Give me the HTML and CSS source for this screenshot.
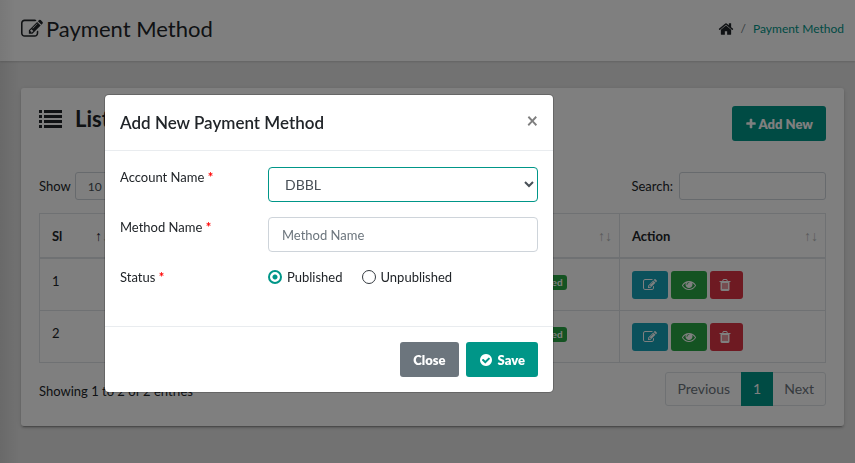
FILE: index.html
```html
<!DOCTYPE html>
<html lang="en">
<head>
<meta charset="utf-8">
<title>Payment Method</title>
<link rel="stylesheet" href="styles.css">
</head>
<body>
<svg class="sprite" aria-hidden="true">
  <symbol id="i-edit" viewBox="0 0 1792 1792"><path d="M888 1184l116-116-152-152-116 116v56h96v96h56zm440-720q-16-16-33 1l-350 350q-17 17-1 33t33-1l350-350q17-17 1-33zm80 594v190q0 119-84.500 203.500t-203.500 84.500h-832q-119 0-203.500-84.500t-84.500-203.500v-832q0-119 84.500-203.500t203.500-84.500h832q63 0 117 25 15 7 18 23 3 17-9 29l-49 49q-14 14-32 8-23-6-45-6h-832q-66 0-113 47t-47 113v832q0 66 47 113t113 47h832q66 0 113-47t47-113v-126q0-13 9-22l64-64q15-15 35-7t20 29zm-96-738l288 288-672 672h-288v-288zm444 132l-92 92-288-288 92-92q28-28 68-28t68 28l152 152q28 28 28 68t-28 68z"/></symbol>
  <symbol id="i-eye" viewBox="0 0 1792 1792"><path d="M1664 960q-152-236-381-353 61 104 61 225 0 185-131.500 316.500t-316.500 131.500-316.500-131.500-131.500-316.500q0-121 61-225-229 117-381 353 133 205 333.500 326.500t434.500 121.500 434.500-121.500 333.500-326.500zm-720-384q0-20-14-34t-34-14q-125 0-214.500 89.500t-89.500 214.500q0 20 14 34t34 14 34-14 14-34q0-86 61-147t147-61q20 0 34-14t14-34zm848 384q0 34-20 69-140 230-376.500 368.500t-499.500 138.500-499.500-139-376.500-368q-20-35-20-69t20-69q140-229 376.500-368t499.500-139 499.500 139 376.500 368q20 35 20 69z"/></symbol>
  <symbol id="i-trash" viewBox="0 0 1792 1792"><path d="M704 1376v-704q0-14-9-23t-23-9h-64q-14 0-23 9t-9 23v704q0 14 9 23t23 9h64q14 0 23-9t9-23zm256 0v-704q0-14-9-23t-23-9h-64q-14 0-23 9t-9 23v704q0 14 9 23t23 9h64q14 0 23-9t9-23zm256 0v-704q0-14-9-23t-23-9h-64q-14 0-23 9t-9 23v704q0 14 9 23t23 9h64q14 0 23-9t9-23zm-544-992h448l-48-117q-7-9-17-11h-317q-10 2-17 11zm928 32v64q0 14-9 23t-23 9h-96v948q0 83-47 143.500t-113 60.500h-832q-66 0-113-58.500t-47-141.500v-952h-96q-14 0-23-9t-9-23v-64q0-14 9-23t23-9h309l70-167q15-37 54-63t79-26h320q40 0 79 26t54 63l70 167h309q14 0 23 9t9 23z"/></symbol>
  <symbol id="i-home" viewBox="0 0 1792 1792"><path d="M1472 992v480q0 26-19 45t-45 19h-384v-384h-256v384h-384q-26 0-45-19t-19-45v-480q0-1 .5-3t.5-3l575-474 575 474q1 2 1 6zm223-69l-62 74q-8 9-21 11h-3q-13 0-21-7l-692-577-692 577q-12 8-24 7-13-2-21-11l-62-74q-8-10-7-23.500t11-21.500l719-599q32-26 76-26t76 26l244 204v-195q0-14 9-23t23-9h192q14 0 23 9t9 23v408l219 182q10 8 11 21.500t-7 23.500z"/></symbol>
  <symbol id="i-plus" viewBox="0 0 1792 1792"><path d="M1600 736v192q0 40-28 68t-68 28h-416v416q0 40-28 68t-68 28h-192q-40 0-68-28t-28-68v-416h-416q-40 0-68-28t-28-68v-192q0-40 28-68t68-28h416v-416q0-40 28-68t68-28h192q40 0 68 28t28 68v416h416q40 0 68 28t28 68z"/></symbol>
  <symbol id="i-check" viewBox="0 0 1792 1792"><path d="M1412 734q0-28-18-46l-91-90q-19-19-45-19t-45 19l-408 407-226-226q-19-19-45-19t-45 19l-91 90q-18 18-18 46 0 27 18 45l362 362q19 19 45 19 27 0 46-19l543-543q18-18 18-45zm252 162q0 209-103 385.500t-279.500 279.500-385.500 103-385.500-103-279.500-279.500-103-385.500 103-385.500 279.500-279.500 385.500-103 385.500 103 279.500 279.500 103 385.500z"/></symbol>
  <symbol id="i-list" viewBox="0 0 23 18"><path d="M0 0h3v3H0zM5 0h18v3H5zM0 5h3v3H0zM5 5h18v3H5zM0 10h3v3H0zM5 10h18v3H5zM0 15h3v3H0zM5 15h18v3H5z"/></symbol>
</svg>

<header class="page-head">
  <h1><svg class="icon icon-lg"><use href="#i-edit"/></svg>Payment Method</h1>
  <nav class="crumbs" aria-label="Breadcrumb">
    <svg class="icon icon-home"><use href="#i-home"/></svg>
    <span class="slash">/</span>
    <a href="#">Payment Method</a>
  </nav>
</header>

<main class="content">
  <section class="tile">
    <div class="tile-head">
      <h2><svg class="icon-list"><use href="#i-list"/></svg>List</h2>
      <button class="btn btn-primary" type="button"><svg class="icon icon-sm"><use href="#i-plus"/></svg>Add New</button>
    </div>

    <div class="table-tools">
      <label>Show <select class="mini length"><option>10</option></select></label>
      <label>Search: <input class="mini search" type="search"></label>
    </div>

    <table>
      <colgroup><col class="c-no"><col><col class="c-status"><col class="c-action"></colgroup>
      <thead>
        <tr>
          <th><div class="th">Sl<span class="sort"><b>↑</b>↓</span></div></th>
          <th></th>
          <th><div class="th th-end"><span class="sort">↑↓</span></div></th>
          <th><div class="th">Action<span class="sort">↑↓</span></div></th>
        </tr>
      </thead>
      <tbody>
        <tr>
          <td>1</td><td></td><td><span class="badge">Published</span></td>
          <td><div class="actions">
            <button class="act info" type="button" aria-label="Edit"><svg class="icon"><use href="#i-edit"/></svg></button>
            <button class="act ok" type="button" aria-label="View"><svg class="icon"><use href="#i-eye"/></svg></button>
            <button class="act danger" type="button" aria-label="Delete"><svg class="icon"><use href="#i-trash"/></svg></button>
          </div></td>
        </tr>
        <tr>
          <td>2</td><td></td><td><span class="badge">Published</span></td>
          <td><div class="actions">
            <button class="act info" type="button" aria-label="Edit"><svg class="icon"><use href="#i-edit"/></svg></button>
            <button class="act ok" type="button" aria-label="View"><svg class="icon"><use href="#i-eye"/></svg></button>
            <button class="act danger" type="button" aria-label="Delete"><svg class="icon"><use href="#i-trash"/></svg></button>
          </div></td>
        </tr>
      </tbody>
    </table>

    <div class="table-foot">
      <p>Showing 1 to 2 of 2 entries</p>
      <nav class="pager" aria-label="Pages">
        <a href="#">Previous</a><a href="#" class="current">1</a><a href="#">Next</a>
      </nav>
    </div>
  </section>
</main>

<div class="backdrop">
  <form class="modal" role="dialog" aria-labelledby="modal-title">
    <div class="modal-head">
      <h3 id="modal-title">Add New Payment Method</h3>
      <button class="close" type="button" aria-label="Dismiss">×</button>
    </div>
    <div class="modal-body">
      <div class="row">
        <label for="account">Account Name <i>*</i></label>
        <select id="account" class="control active"><option>DBBL</option></select>
      </div>
      <div class="row">
        <label for="method">Method Name <i>*</i></label>
        <input id="method" class="control" type="text" placeholder="Method Name">
      </div>
      <div class="row">
        <span>Status <i>*</i></span>
        <div class="radios">
          <label><input type="radio" name="status" checked>Published</label>
          <label><input type="radio" name="status">Unpublished</label>
        </div>
      </div>
    </div>
    <div class="modal-foot">
      <button class="btn btn-secondary" type="button">Close</button>
      <button class="btn btn-primary" type="button"><svg class="icon icon-gap"><use href="#i-check"/></svg>Save</button>
    </div>
  </form>
</div>
</body>
</html>
```
FILE: styles.css
```css
* { box-sizing: border-box; }

body {
  margin: 0;
  min-height: 100vh;
  background: linear-gradient(to right, rgba(0, 0, 0, .08), transparent 20px) #e5e5e5;
  color: #212529;
  font: 13px/20px Lato, "Liberation Sans", sans-serif;
  overflow: hidden;
}

h1, h2, h3, p { margin: 0; }
button, input, select { font: inherit; color: inherit; }
a { text-decoration: none; }

.sprite { position: absolute; width: 0; height: 0; }
.icon { width: 14px; height: 14px; fill: currentColor; flex: none; }
.icon-sm { width: 12px; height: 12px; }
.icon-lg { width: 22px; height: 22px; }
.icon-home { width: 16px; height: 16px; }

.page-head {
  display: flex;
  align-items: center;
  justify-content: space-between;
  padding: 15px 11px 18px 21px;
  background: linear-gradient(to right, rgba(0, 0, 0, .06), transparent 16px) #fff;
  box-shadow: 0 1px 2px rgba(0, 0, 0, .15);
}
.page-head h1 {
  display: flex;
  align-items: center;
  gap: 3px;
  font-size: 22px;
  line-height: 28px;
  font-weight: 400;
}
.crumbs { display: flex; align-items: center; gap: 7px; font-size: 12px; }
.crumbs a { color: #009688; }
.slash { color: #6c757d; }

.content { padding: 27px 11px 37px 21px; }

.tile {
  padding: 18px 18px 20px;
  background: #fff;
  border-radius: 3px;
  box-shadow: 0 2px 2px rgba(0, 0, 0, .14), 0 1px 5px rgba(0, 0, 0, .12), 0 3px 1px -2px rgba(0, 0, 0, .2);
}
.tile-head { display: flex; justify-content: space-between; align-items: flex-start; }
.tile-head h2 {
  display: flex;
  align-items: center;
  gap: 13px;
  font-size: 22px;
  line-height: 26px;
}
.icon-list { width: 23px; height: 18px; fill: currentColor; }

.btn {
  display: flex;
  align-items: center;
  gap: 2px;
  height: 35px;
  padding: 0 12px;
  border: 1px solid transparent;
  border-radius: 3px;
  color: #fff;
  font-weight: 800;
}
.btn-primary { background: #009688; }
.btn-secondary { background: #6c757d; }
.icon-gap { margin-right: 3px; }

.table-tools {
  display: flex;
  justify-content: space-between;
  margin: 31px 0 13px;
}
.table-tools label { display: flex; align-items: center; gap: 4px; }
.table-tools label + label { gap: 6px; }
.mini {
  height: 28px;
  border: 1px solid #ced4da;
  border-radius: 3px;
  background: #fff;
  font-size: 12px;
}
.length { width: 56px; padding: 0 8px; color: #495057; }
.search { width: 147px; }

table {
  width: 100%;
  table-layout: fixed;
  border-spacing: 0;
  border: 1px solid #dee2e6;
  border-width: 1px 0 0 1px;
}
.c-no { width: 77px; }
.c-status { width: 117px; }
.c-action { width: 206px; }
th, td {
  border: 1px solid #dee2e6;
  border-width: 0 1px 1px 0;
  padding: 12px 12px 11px;
  text-align: left;
  vertical-align: top;
}
th { border-bottom-width: 2px; padding-right: 7px; }
.th { display: flex; justify-content: space-between; }
.th-end { justify-content: flex-end; }
.sort { color: #b5b7b8; font: 14px/20px "Liberation Sans", sans-serif; }
.sort b { color: #212529; font-weight: 400; }
.badge {
  display: inline-block;
  padding: 0 4px;
  border-radius: 3px;
  background: #28a745;
  color: #fff;
  font-size: 10px;
  line-height: 15px;
  font-weight: 700;
}
.actions { display: flex; gap: 3px; }
.act {
  display: flex;
  align-items: center;
  padding: 0 10px;
  height: 28px;
  border: 1px solid transparent;
  border-radius: 3px;
  color: #fff;
}
.info { background: #17a2b8; }
.ok { background: #28a745; }
.danger { background: #dc3545; padding: 0 10px 0 7px; }

.table-foot { display: flex; justify-content: space-between; margin-top: 9px; }
.table-foot p { padding-top: 9px; }
.pager { display: flex; border: 1px solid #dee2e6; border-radius: 3px; font-size: 14px; }
.pager a { padding: 6px 11px; color: #6c757d; }
.pager .current { margin: -1px 0; padding: 7px 12px; background: #009688; color: #fff; }

.backdrop {
  position: fixed;
  inset: 0;
  padding: 95px 302px 0 105px;
  background: rgba(0, 0, 0, .5);
}
.modal {
  background: #fff;
  border-radius: 4px;
  box-shadow: 0 0 0 1px rgba(0, 0, 0, .2);
}
.modal-head {
  display: flex;
  justify-content: space-between;
  padding: 15px;
  border-bottom: 1px solid #e9ecef;
}
.modal-head h3 { font-size: 17px; line-height: 25px; font-weight: 600; }
.close {
  height: 20px;
  padding: 0;
  border: 0;
  background: none;
  color: #7f7f7f;
  font-size: 20px;
  line-height: 20px;
  font-weight: 700;
}
.modal-body { display: grid; gap: 15px; padding: 16px 15px 24px; }
.row { display: grid; grid-template-columns: 148px 1fr; min-height: 35px; }
.row i { color: #f00; font-style: normal; font-weight: 700; }
.control {
  width: 100%;
  height: 35px;
  padding: 0 13px;
  border: 1px solid #ced4da;
  border-radius: 4px;
  background: #fff;
  color: #495057;
}
.control.active { border-color: #009688; padding: 0 0 0 12px; font-size: 14px; }
.control::placeholder { color: #6c757d; }
.radios { display: flex; align-items: flex-start; gap: 19px; }
.radios label { display: flex; align-items: center; gap: 5px; }
.radios input {
  appearance: none;
  width: 14px;
  height: 14px;
  margin: 0;
  border: 1px solid #343a40;
  border-radius: 50%;
}
.radios input:checked {
  border: 2px solid #009688;
  background: radial-gradient(circle, #009688 2px, transparent 3px);
}
.modal-foot {
  display: flex;
  justify-content: flex-end;
  gap: 7px;
  padding: 15px;
  border-top: 1px solid #e9ecef;
}
```
